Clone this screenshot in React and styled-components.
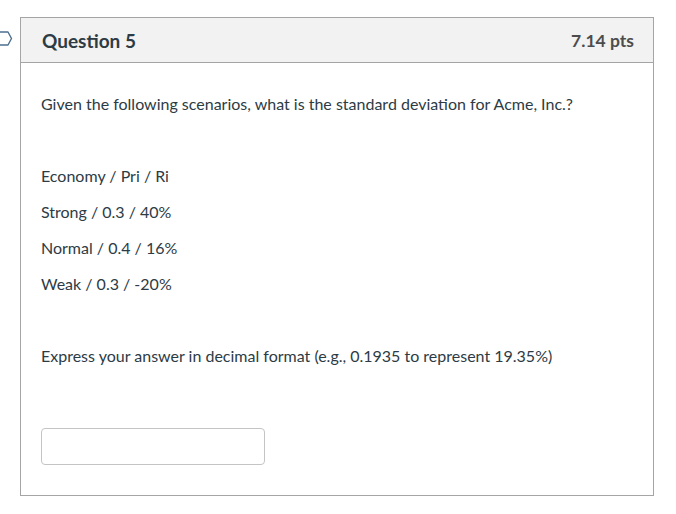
import React from "react";
import styled, { createGlobalStyle } from "styled-components";

const GlobalStyle = createGlobalStyle`
  html, body {
    margin: 0;
    padding: 0;
    background: #fff;
  }
  body {
    font-family: Lato, "Helvetica Neue", Arial, sans-serif;
    color: #2d3b45;
  }
`;

const Page = styled.div`
  padding: 17px 22px 0 20px;
  width: 676px;
  box-sizing: border-box;
`;

const Card = styled.div`
  position: relative;
  border: 1px solid #a5a5a5;
  width: 634px;
  box-sizing: border-box;
  background: #fff;
`;

const Flag = styled.svg`
  position: absolute;
  left: -20px;
  top: 13px;
  width: 12px;
  height: 16px;
  overflow: visible;
`;

const Header = styled.div`
  display: flex;
  align-items: center;
  justify-content: space-between;
  height: 44px;
  padding: 0 19px 0 21px;
  background: #f2f2f2;
  border-bottom: 1px solid #a5a5a5;
`;

const Title = styled.h2`
  margin: 0;
  font-size: 19px;
  font-weight: 700;
  color: #2d3b45;
`;

const Points = styled.span`
  font-size: 17.5px;
  font-weight: 700;
  color: #4c4c4c;
`;

const Body = styled.div`
  padding: 29px 20px 30px 20px;
`;

const Para = styled.p`
  margin: 0 0 12px 0;
  font-size: 16px;
  line-height: 24px;
  color: #2d3b45;
`;

const AnswerInput = styled.input`
  display: block;
  margin-top: 24px;
  width: 224px;
  height: 37px;
  box-sizing: border-box;
  border: 1px solid #c4c4c4;
  border-radius: 4px;
  font-family: inherit;
  font-size: 16px;
  padding: 0 8px;
  color: #2d3b45;
`;

const rows = [
  "Economy / Pri / Ri",
  "Strong / 0.3 / 40%",
  "Normal / 0.4 / 16%",
  "Weak / 0.3 / -20%",
];

export default function App() {
  return (
    <Page>
      <GlobalStyle />
      <Card>
        <Flag viewBox="0 0 12 16">
          <path
            d="M-8 1 H7 L10.5 7.5 L7 14 H-8"
            fill="none"
            stroke="#4b6f8e"
            strokeWidth="1.4"
            strokeLinejoin="round"
          />
        </Flag>
        <Header>
          <Title>Question 5</Title>
          <Points>7.14 pts</Points>
        </Header>
        <Body>
          <Para>
            Given the following scenarios, what is the standard deviation for
            Acme, Inc.?
          </Para>
          <Para>&nbsp;</Para>
          {rows.map((r) => (
            <Para key={r}>{r}</Para>
          ))}
          <Para>&nbsp;</Para>
          <Para>
            Express your answer in decimal format (e.g., 0.1935 to represent
            19.35%)
          </Para>
          <Para>&nbsp;</Para>
          <AnswerInput type="text" aria-label="Answer" />
        </Body>
      </Card>
    </Page>
  );
}
